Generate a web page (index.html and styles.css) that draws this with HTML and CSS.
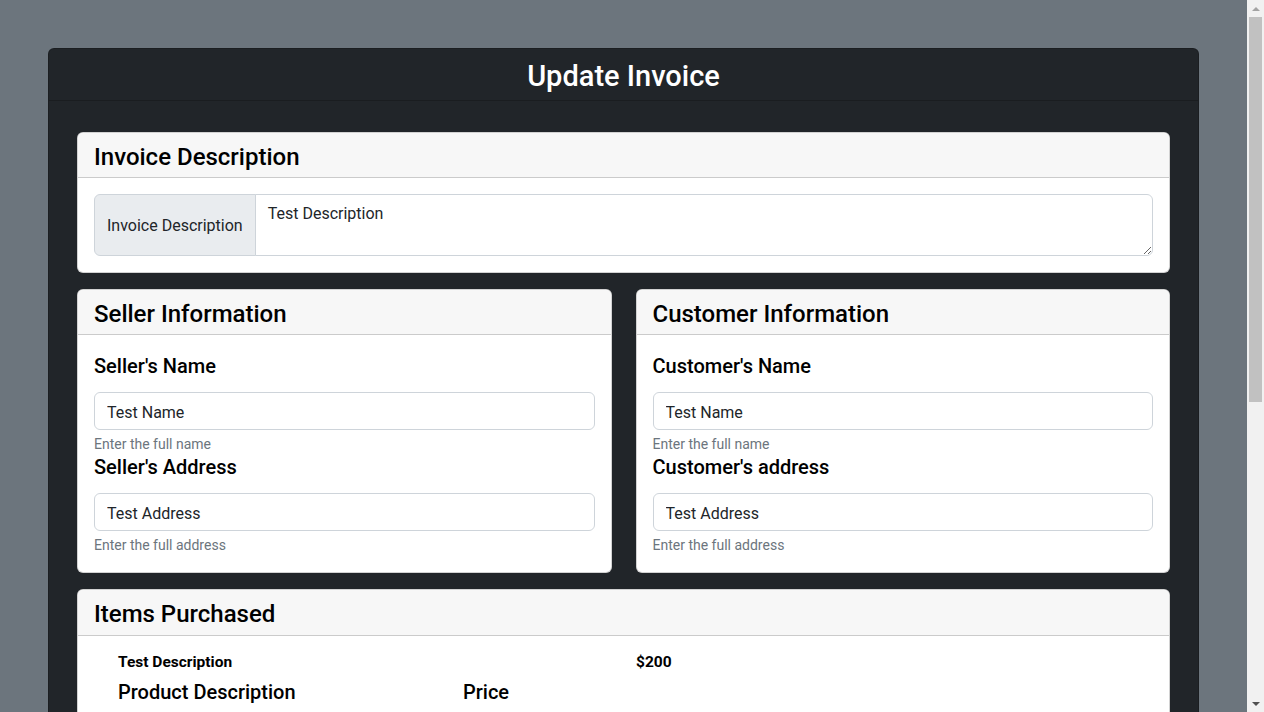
FILE: index.html
```html
<!DOCTYPE html>
<html lang="en">
<head>
<meta charset="utf-8">
<title>Update Invoice</title>
<link rel="stylesheet" href="styles.css">
</head>
<body>
<div class="page">
  <div class="main-card">
    <div class="main-header"><h3 class="main-title">Update Invoice</h3></div>
    <div class="main-body">
      <section class="card">
        <div class="card-header"><h4>Invoice Description</h4></div>
        <div class="card-body">
          <div class="input-group">
            <span class="input-group-text">Invoice Description</span>
            <textarea class="form-control textarea" rows="2">Test Description</textarea>
          </div>
        </div>
      </section>

      <div class="two-col">
        <section class="card">
          <div class="card-header"><h4>Seller Information</h4></div>
          <div class="card-body field-body">
            <h5 class="field-label">Seller's Name</h5>
            <input class="form-control" type="text" value="Test Name">
            <div class="form-text">Enter the full name</div>
            <h5 class="field-label">Seller's Address</h5>
            <input class="form-control" type="text" value="Test Address">
            <div class="form-text">Enter the full address</div>
          </div>
        </section>
        <section class="card">
          <div class="card-header"><h4>Customer Information</h4></div>
          <div class="card-body field-body">
            <h5 class="field-label">Customer's Name</h5>
            <input class="form-control" type="text" value="Test Name">
            <div class="form-text">Enter the full name</div>
            <h5 class="field-label">Customer's address</h5>
            <input class="form-control" type="text" value="Test Address">
            <div class="form-text">Enter the full address</div>
          </div>
        </section>
      </div>

      <section class="card">
        <div class="card-header items-header"><h4>Items Purchased</h4></div>
        <div class="card-body items-body">
          <div class="item-row">
            <span class="item-desc">Test Description</span>
            <span class="item-price">$200</span>
          </div>
          <div class="item-head">
            <h5 class="item-head-desc">Product Description</h5>
            <h5 class="item-head-price">Price</h5>
          </div>
          <div class="item-inputs">
            <input class="form-control item-input-desc" type="text" placeholder="Product Description">
            <input class="form-control item-input-price" type="text" placeholder="Price">
            <button class="btn" type="button">Add Item</button>
          </div>
        </div>
      </section>

      <div class="actions">
        <button class="btn btn-primary" type="button">Update Invoice</button>
      </div>
    </div>
  </div>
</div>

<div class="scrollbar" aria-hidden="true">
  <div class="sb-btn"><span class="sb-arrow-up"></span></div>
  <div class="sb-track"><div class="sb-thumb"></div></div>
  <div class="sb-btn"><span class="sb-arrow-down"></span></div>
</div>
</body>
</html>
```

FILE: styles.css
```css
* { box-sizing: border-box; }
html, body { margin: 0; padding: 0; }
body {
  background: #6c757d;
  font-family: Roboto, "Liberation Sans", sans-serif;
  font-size: 16px;
  line-height: 1.5;
  color: #212529;
}
.page { padding: 48px 65px 48px 48px; }
.main-card {
  background: #212529;
  border-radius: 6px;
  border: 1px solid rgba(0,0,0,0.175);
}
.main-header {
  padding: 10px 16px 7px;
  border-bottom: 1px solid #1a1d20;
  text-align: center;
}
.main-title {
  margin: 0;
  color: #fff;
  font-size: 29px;
  font-weight: 500;
  line-height: 34px;
}
.main-body {
  padding: 31px 28px 40px;
  display: flex;
  flex-direction: column;
  gap: 16px;
}
.card {
  background: #fff;
  border: 1px solid rgba(0,0,0,0.175);
  border-radius: 6px;
  overflow: hidden;
}
.card-header {
  background: #f7f7f7;
  border-bottom: 1px solid rgba(0,0,0,0.175);
  padding: 10px 16px 6px;
}
.items-header { padding-bottom: 7px; }
.card-header h4 {
  margin: 0;
  font-size: 24px;
  font-weight: 500;
  line-height: 28px;
  color: #000;
}
.card-body { padding: 16px; }
.input-group { display: flex; align-items: stretch; }
.input-group-text {
  display: flex;
  align-items: center;
  padding: 7px 12px 5px;
  background: #e9ecef;
  border: 1px solid #ced4da;
  border-radius: 6px 0 0 6px;
  white-space: nowrap;
  color: #212529;
}
.form-control {
  display: block;
  width: 100%;
  padding: 7px 12px 5px;
  font-family: inherit;
  font-size: 16px;
  line-height: 24px;
  color: #212529;
  background: #fff;
  border: 1px solid #ced4da;
  border-radius: 6px;
  height: 38px;
}
.textarea {
  flex: 1;
  height: 62px;
  border-radius: 0 6px 6px 0;
  margin-left: -1px;
  resize: vertical;
}
.two-col {
  display: grid;
  grid-template-columns: 1fr 1fr;
  gap: 24px;
}
.field-body { padding-top: 19px; }
.field-label {
  margin: 0 0 14px;
  font-size: 20px;
  font-weight: 500;
  line-height: 24px;
  color: #000;
}
.form-text {
  margin-top: 4px;
  font-size: 14px;
  line-height: 21px;
  color: #6c757d;
}
.items-body { padding: 16px 40px 16px; }
.item-row {
  display: flex;
  font-size: 15.5px;
  font-weight: 700;
  line-height: 21px;
  color: #000;
}
.item-desc { width: 518px; }
.item-head {
  display: flex;
  margin-top: 7px;
}
.item-head h5 {
  margin: 0;
  font-size: 20px;
  font-weight: 500;
  line-height: 24px;
  color: #000;
}
.item-head-desc { width: 345px; }
.item-inputs {
  display: flex;
  gap: 16px;
  margin-top: 12px;
  align-items: center;
}
.item-input-desc { width: 329px; }
.item-input-price { width: 200px; }
.btn {
  font-family: inherit;
  font-size: 16px;
  line-height: 24px;
  padding: 6px 12px;
  border-radius: 6px;
  border: 1px solid #6c757d;
  background: #6c757d;
  color: #fff;
}
.actions { display: flex; justify-content: center; }
.btn-primary { background: #0d6efd; border-color: #0d6efd; }

/* classic scrollbar drawn over the right edge */
.scrollbar {
  position: fixed;
  top: 0;
  right: 0;
  width: 17px;
  height: 100vh;
  background: #f1f1f1;
  display: flex;
  flex-direction: column;
}
.sb-btn {
  height: 17px;
  display: flex;
  align-items: center;
  justify-content: center;
}
.sb-arrow-up {
  width: 0; height: 0;
  border-left: 4px solid transparent;
  border-right: 4px solid transparent;
  border-bottom: 4px solid #a3a3a3;
}
.sb-arrow-down {
  width: 0; height: 0;
  border-left: 4px solid transparent;
  border-right: 4px solid transparent;
  border-top: 4px solid #505050;
}
.sb-track { flex: 1; padding: 0 2px; }
.sb-thumb {
  height: 385px;
  background: #c1c1c1;
}
```
